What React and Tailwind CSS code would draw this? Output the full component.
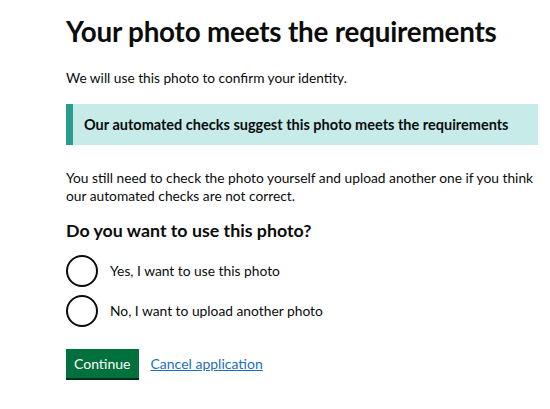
export default function App() {
  return (
    <div className="min-h-[409px] w-[550px] bg-white text-[#0b0c0c] font-['Lato',sans-serif]">
      <div className="pl-[66px] pr-[12px] pt-[14px]">
        <h1 className="text-[27.8px] font-bold leading-[36px] tracking-[-0.2px]">Your photo meets the requirements</h1>
        <p className="mt-[19px] text-[13.7px] leading-[18px]">We will use this photo to confirm your identity.</p>
        <div className="mt-[17px] w-[472px] h-[41px] border-l-[7px] border-[#2a9d8f] bg-[#c6ebe8] flex items-center pl-[11px]">
          <p className="text-[14.5px] font-bold">Our automated checks suggest this photo meets the requirements</p>
        </div>
        <p className="mt-[24px] text-[13.75px] leading-[18px] w-[476px]">You still need to check the photo yourself and upload another one if you think our automated checks are not correct.</p>
        <h2 className="mt-[13px] text-[17.8px] font-bold leading-[24px]">Do you want to use this photo?</h2>
        <div className="mt-[13px] flex flex-col gap-[8px]">
          {["Yes, I want to use this photo", "No, I want to upload another photo"].map((t) => (
            <label key={t} className="flex items-center gap-[12px] h-[32px]">
              <span className="w-[32px] h-[32px] rounded-full border-2 border-[#0b0c0c] shrink-0" />
              <span className="text-[13.8px]">{t}</span>
            </label>
          ))}
        </div>
        <div className="mt-[22px] flex items-center gap-[12px]">
          <button className="h-[29px] px-[8px] bg-[#00703c] text-white text-[14px] shadow-[0_2px_0_#002d18] leading-none">Continue</button>
          <a href="#" className="text-[14px] text-[#1d70b8] underline">Cancel application</a>
        </div>
      </div>
    </div>
  );
}
